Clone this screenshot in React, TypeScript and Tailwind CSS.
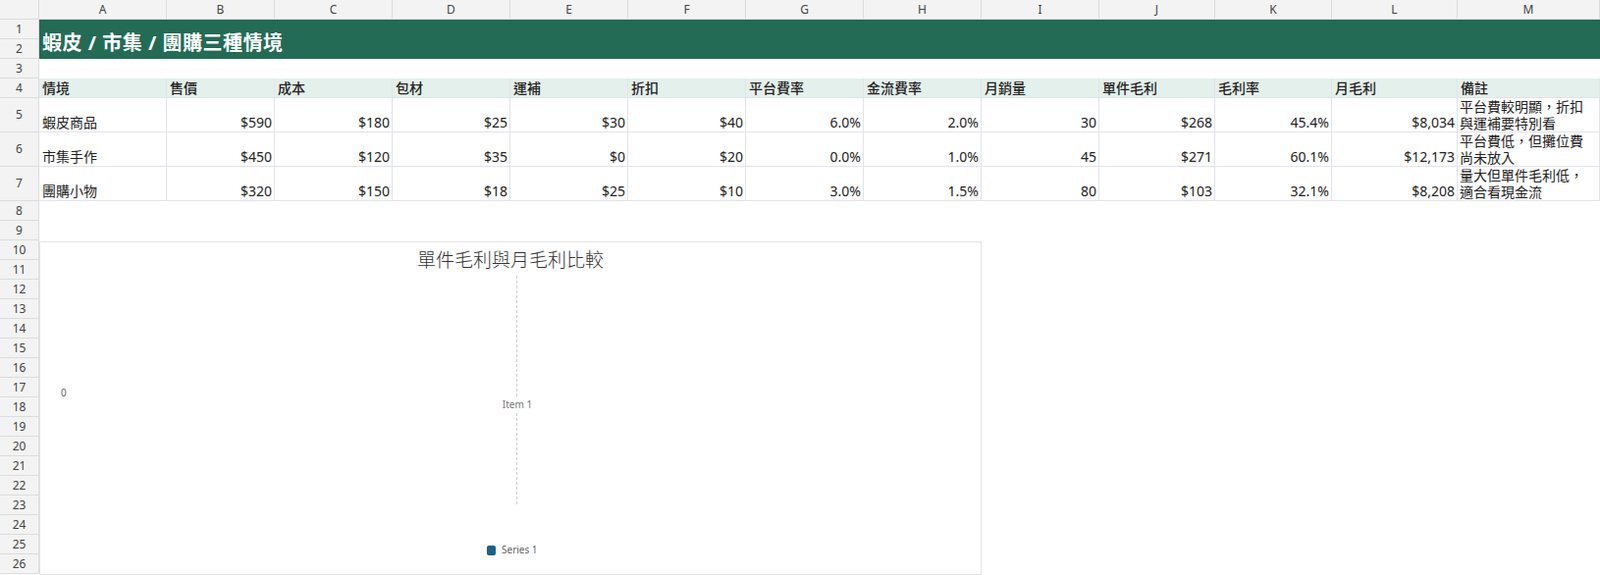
const COLS = ["A", "B", "C", "D", "E", "F", "G", "H", "I", "J", "K", "L", "M"];
const HEAD = ["情境", "售價", "成本", "包材", "運補", "折扣", "平台費率", "金流費率", "月銷量", "單件毛利", "毛利率", "月毛利", "備註"];
const DATA = [
  ["蝦皮商品", "$590", "$180", "$25", "$30", "$40", "6.0%", "2.0%", "30", "$268", "45.4%", "$8,034", "平台費較明顯，折扣與運補要特別看"],
  ["市集手作", "$450", "$120", "$35", "$0", "$20", "0.0%", "1.0%", "45", "$271", "60.1%", "$12,173", "平台費低，但攤位費尚未放入"],
  ["團購小物", "$320", "$150", "$18", "$25", "$10", "3.0%", "1.5%", "80", "$103", "32.1%", "$8,208", "量大但單件毛利低，適合看現金流"],
];

const font = { fontFamily: '"Noto Sans", "Noto Sans CJK TC", sans-serif' };

function RowNum({ n }: { n: number }) {
  return (
    <div className="bg-[#f3f3f3] border-r border-b border-[#dcdcdc] flex items-center justify-center text-[12px] text-[#444] font-['Liberation_Sans',sans-serif]">
      {n}
    </div>
  );
}

function Cell({ children, className = "" }: { children?: React.ReactNode; className?: string }) {
  return <div className={`border-r border-b border-[#e3e3ec] overflow-hidden ${className}`}>{children}</div>;
}

export default function App() {
  const cells: React.ReactNode[] = [];
  cells.push(<div key="corner" className="bg-[#f3f3f3] border-r border-b border-[#dcdcdc]" />);
  COLS.forEach((c) =>
    cells.push(
      <div key={"h" + c} className="bg-[#f3f3f3] border-r border-b border-[#dcdcdc] flex items-center justify-center text-[12px] text-[#444] font-['Liberation_Sans',sans-serif]">
        {c}
      </div>
    )
  );
  cells.push(<RowNum key="r1" n={1} />);
  cells.push(
    <div key="title" className="col-span-13 row-span-2 bg-[#236b55] flex items-end px-[3px] pb-[1px] text-white text-[20px] font-bold tracking-[0.5px]">
      蝦皮 / 市集 / 團購三種情境
    </div>
  );
  cells.push(<RowNum key="r2" n={2} />);
  cells.push(<RowNum key="r3" n={3} />);
  cells.push(<div key="3blank" className="col-span-13" />);
  cells.push(<RowNum key="r4" n={4} />);
  HEAD.forEach((h, i) =>
    cells.push(
      <Cell key={"4" + i} className="bg-[#e4f0eb] flex items-end px-[3px] text-[14px] text-[#222] font-medium leading-[19px]">
        {h}
      </Cell>
    )
  );
  DATA.forEach((row, r) => {
    cells.push(<RowNum key={"r" + (5 + r)} n={5 + r} />);
    row.forEach((v, i) =>
      cells.push(
        <Cell
          key={r + "-" + i}
          className={`flex items-end text-[14px] text-[#222] ${i === 0 ? "px-[3px] leading-[19px]" : i === 12 ? "px-[2px] leading-[17px]" : "justify-end px-[2px] leading-[19px]"}`}
        >
          {i === 12 ? <span className="w-[134px]">{v}</span> : v}
        </Cell>
      )
    );
  });
  for (let n = 8; n <= 26; n++) {
    cells.push(<RowNum key={"r" + n} n={n} />);
    cells.push(<div key={n + "blank"} className="col-span-13" />);
  }

  return (
    <div className="relative w-[1630px] h-[586px] bg-white overflow-hidden" style={font}>
      <div className="grid grid-cols-[40px_130px_110px_120px_120px_120px_120px_120px_120px_120px_118px_119px_128px_145px] grid-rows-[20px_20px_20px_20px_20px_35px_35px_35px_repeat(19,20px)]">
        {cells}
      </div>

      <div className="absolute left-[40px] top-[246px] w-[960px] h-[340px] bg-white border border-[#e4e4e4]">
        <div className="text-center text-[19px] text-[#333] font-light mt-[4px]">單件毛利與月毛利比較</div>
        <div className="absolute left-[485px] top-[34px] h-[233px] border-l border-dashed border-[#cfcfcf]" />
        <div className="absolute left-[21px] top-[146px] text-[10px] text-[#666]">0</div>
        <div className="absolute left-[465px] top-[158px] w-[42px] whitespace-nowrap bg-white text-center text-[10px] text-[#777]">Item 1</div>
        <div className="absolute left-[455px] top-[306px] flex items-center gap-[6px] text-[10px] text-[#666]">
          <span className="w-[9px] h-[10px] rounded-[2px] bg-[#1e5f86]" />
          Series 1
        </div>
      </div>
    </div>
  );
}
